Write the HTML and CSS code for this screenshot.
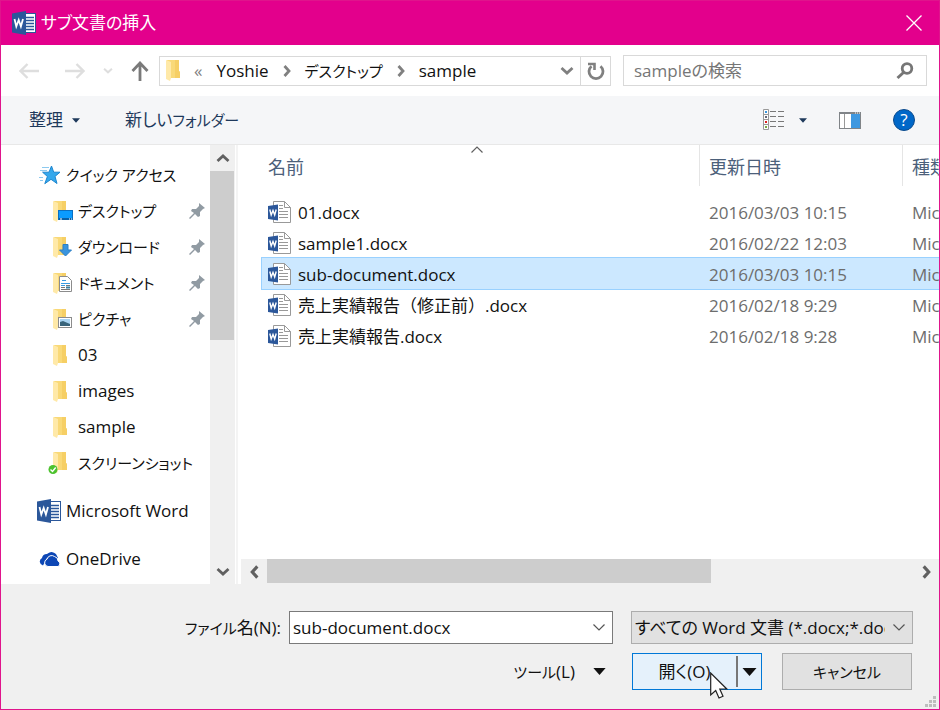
FILE: index.html
```html
<!DOCTYPE html>
<html lang="ja">
<head>
  <meta charset="UTF-8">
  <meta name="viewport" content="width=device-width, initial-scale=1.0">
  <title>サブ文書の挿入</title>
  <link rel="stylesheet" href="styles.css">
</head>
<body>
  <!-- shared icons -->
  <svg class="defs" width="0" height="0">
    <symbol id="word" viewBox="0 0 24 24">
      <rect x="13" y="2.500" width="10.500" height="19" fill="#fff" stroke="#2b579a"/>
      <path d="M14 6.500h8M14 9.500h8M14 12.500h8M14 15.500h8M14 18.500h8" stroke="#2b579a" stroke-width="1.300"/>
      <path d="M0 2.500L14 0v24L0 21.500z" fill="#2b579a"/>
      <path d="M2.500 8l1.800 7.500L6.700 9l2.200 6.500L11 8" fill="none" stroke="#fff" stroke-width="1.800"/>
    </symbol>
    <symbol id="docx" viewBox="0 0 23 22">
      <path d="M5.500.500h11l6 6v15h-17z" fill="#fff" stroke="#999"/>
      <path d="M16.500.500v6h6" fill="none" stroke="#999"/>
      <path d="M11 4.500h4M11 7.500h4M11 10.500h9M11 13.500h9M11 16.500h9" stroke="#999"/>
      <path d="M0 5l10-1.500v16L0 18z" fill="#2b579a"/>
      <path d="M1.800 8.500l1.400 5.500L5 9.500l1.700 4.500 1.500-5.500" fill="none" stroke="#fff" stroke-width="1.400"/>
    </symbol>
    <symbol id="folder" viewBox="0 0 14 21">
      <path d="M1 0h12v11l1 1v6H4z" fill="#f9d978"/>
      <path d="M9 0h4v11l1 1v6H9z" fill="#f6cf65"/>
      <path d="M0 0l5 2v16l-1 3-4-2z" fill="#ffe9a8"/>
    </symbol>
    <symbol id="pin" viewBox="0 0 16 16">
      <path d="M10 0l6 5-2 1-3 3v4l-2 1-3-3-5 5-1-1 5-5-3-2 1-2h4l3-3z" fill="#919ba3"/>
    </symbol>
    <symbol id="down" viewBox="0 0 14 8"><path d="M1.500 1.500L7 6.500l5.500-5" fill="none" stroke="currentColor" stroke-width="2.800"/></symbol>
    <symbol id="thin-down" viewBox="0 0 12 7"><path d="M.500.500L6 6 11.500.500" fill="none" stroke="currentColor" stroke-width="1.200"/></symbol>
    <symbol id="right" viewBox="0 0 8 12"><path d="M1.500 1L6 6l-4.500 5" fill="none" stroke="currentColor" stroke-width="2.800"/></symbol>
    <symbol id="triangle" viewBox="0 0 14 8"><path d="M0 0h14L7 8z" fill="currentColor"/></symbol>
  </svg>

  <header class="titlebar">
    <svg class="icon-word"><use href="#word"/></svg>
    <h1>サブ文書の挿入</h1>
    <button class="close" aria-label="閉じる">
      <svg width="16" height="16"><path d="M.500.500l15 15M15.500.500l-15 15" stroke="#fff" stroke-width="1.300"/></svg>
    </button>
  </header>

  <nav class="navbar">
    <div class="history">
      <button aria-label="戻る"><svg width="20" height="16"><path d="M20 8H2M8.500 1L1.500 8l7 7" fill="none" stroke="#dedede" stroke-width="2.400"/></svg></button>
      <button aria-label="進む"><svg width="20" height="16"><path d="M0 8h18M11.500 1l7 7-7 7" fill="none" stroke="#dedede" stroke-width="2.400"/></svg></button>
      <button class="recent" aria-label="最近表示した場所"><svg width="10" height="7"><use href="#down"/></svg></button>
      <button aria-label="上へ"><svg width="18" height="20"><path d="M9 20V2M1.500 10L9 2l7.500 8" fill="none" stroke="#7a7a7a" stroke-width="2.800"/></svg></button>
    </div>
    <div class="address">
      <svg class="icon-folder"><use href="#folder"/></svg>
      <span class="more">«</span>
      <a href="#">Yoshie</a>
      <svg width="8" height="12"><use href="#right"/></svg>
      <a href="#" class="kana">デスクトップ</a>
      <svg width="8" height="12"><use href="#right"/></svg>
      <a href="#">sample</a>
      <button class="address-list" aria-label="以前の場所"><svg width="14" height="9"><use href="#down"/></svg></button>
      <button class="refresh" aria-label="更新">
        <svg width="18" height="18"><path d="M4.500 4.200A7 7 0 1 0 13.500 4.200" fill="none" stroke="#808080" stroke-width="2.800"/><path d="M1 2h6.500v6" fill="none" stroke="#808080" stroke-width="2.600"/></svg>
      </button>
    </div>
    <div class="search">
      <input type="text" aria-label="検索" placeholder="sampleの検索">
      <svg width="18" height="18"><circle cx="11" cy="6.500" r="4.800" fill="none" stroke="#767676" stroke-width="2.800"/><path d="M7.500 10.500L1.500 16" stroke="#767676" stroke-width="3"/></svg>
    </div>
  </nav>

  <div class="toolbar">
    <button>整理 <svg class="caret"><use href="#triangle"/></svg></button>
    <button><span>新しい<span class="kana">フォルダー</span></span></button>
    <div class="views">
      <button aria-label="表示方法">
        <svg width="22" height="22">
          <path d="M.500.500h5v20h-5zM.500 5.500h5M.500 10.500h5M.500 15.500h5" fill="#fff" stroke="#999"/>
          <path d="M7 2.500h6M15 2.500h6M7 7.500h6M15 7.500h6M7 12.500h6M15 12.500h6M7 17.500h6M15 17.500h6" stroke="#777"/>
          <path d="M2 3h2" stroke="#3a96dd" stroke-width="2"/><path d="M2 8h2" stroke="#667" stroke-width="2"/>
          <path d="M2 13h2" stroke="#d22" stroke-width="2"/><path d="M2 18h2" stroke="#7a4" stroke-width="2"/>
        </svg>
        <svg class="caret"><use href="#triangle"/></svg>
      </button>
      <button aria-label="プレビュー ウィンドウ">
        <svg width="22" height="17"><rect x=".500" y=".500" width="21" height="16" fill="#fff" stroke="#808488"/><path d="M0 1h22" stroke="#808488" stroke-width="2"/><path d="M5.500 2v14" stroke="#999"/><rect x="12" y="2" width="9" height="14" fill="#3f98e0"/><path d="M16 1h1M18 1h1M20 1h1" stroke="#fff"/></svg>
      </button>
      <button class="help" aria-label="ヘルプ">?</button>
    </div>
  </div>

  <main>
    <aside>
      <ul class="places">
        <li class="root">
          <svg width="22" height="20"><path d="M12.500 1l2.200 6.200h6.300l-5 4.200 2 7.100-6-4.200-6.200 4.400 2.600-7.200-4.800-4.300h6.400z" fill="#35a8ec" stroke="#1d86cf"/><path d="M3 2.500h7M1 5.500h7M0 12.500h4M1 15.500h3" stroke="#8cc9ef"/></svg>
          <a href="#" class="kana">クイック アクセス</a>
        </li>
        <li>
          <svg class="place-icon"><use href="#folder" x="2" y="0" width="14" height="21"/><rect x="7.500" y="9.500" width="14" height="9" fill="#0a9bff" stroke="#0a6fc2"/><path d="M8 18h13" stroke="#0860a8" stroke-width="2"/><path d="M9 18h2M18 18h1M20 18h1" stroke="#fff"/></svg>
          <a href="#" class="kana">デスクトップ</a><svg class="pin"><use href="#pin"/></svg>
        </li>
        <li>
          <svg class="place-icon"><use href="#folder" x="2" y="0" width="14" height="21"/><path d="M12 7.500h5v5.500h3.500L14.500 19 8.500 13H12z" fill="#3a94dd" stroke="#2b7fc6"/></svg>
          <a href="#" class="kana">ダウンロード</a><svg class="pin"><use href="#pin"/></svg>
        </li>
        <li>
          <svg class="place-icon"><use href="#folder" x="2" y="0" width="14" height="21"/><path d="M8.500 3.500h8l4 4v11h-12z" fill="#fff" stroke="#8c8c8c"/><path d="M11 7.500h4M10 10.500h9M10 12.500h4" stroke="#3a9be0"/><path d="M15 12.500h4M10 14.500h4M10 16.500h9" stroke="#777"/><path d="M15 14.500h4" stroke="#3a7ea0" stroke-width="2"/></svg>
          <a href="#" class="kana">ドキュメント</a><svg class="pin"><use href="#pin"/></svg>
        </li>
        <li>
          <svg class="place-icon"><use href="#folder" x="2" y="0" width="14" height="21"/><rect x="7.500" y="8.500" width="13" height="10" fill="#fff" stroke="#8c8c8c"/><rect x="9" y="10" width="10" height="7" fill="#a9d4f2"/><path d="M9 13l3-1 7 3v2H9z" fill="#38647b"/></svg>
          <a href="#" class="kana">ピクチャ</a><svg class="pin"><use href="#pin"/></svg>
        </li>
        <li><svg class="place-icon"><use href="#folder" x="2" y="0" width="14" height="21"/></svg><a href="#">03</a></li>
        <li><svg class="place-icon"><use href="#folder" x="2" y="0" width="14" height="21"/></svg><a href="#">images</a></li>
        <li><svg class="place-icon"><use href="#folder" x="2" y="0" width="14" height="21"/></svg><a href="#">sample</a></li>
        <li>
          <svg class="place-icon synced"><use href="#folder" x="6" y="0" width="14" height="21"/><circle cx="6" cy="17.500" r="4.500" fill="#4cc22e"/><path d="M3.500 17.500l2 2 3.200-4" fill="none" stroke="#fff" stroke-width="1.400"/></svg>
          <a href="#" class="kana">スクリーンショット</a>
        </li>
        <li class="root spaced"><svg class="icon-word"><use href="#word"/></svg><a href="#">Microsoft Word</a></li>
        <li class="root spaced">
          <svg width="22" height="16"><path d="M4 14.500a4 4 0 0 1-1-7.500A5 5 0 0 1 8 3a6 6 0 0 1 10 2l1 2H8z" fill="#0d47b5"/><path d="M9 15.500a3.800 3.800 0 0 1-1-7.300A4.800 4.800 0 0 1 15.500 5.500a4.500 4.500 0 0 1 3.500 4.500A3 3 0 0 1 19 15.500z" fill="#0d47b5" stroke="#fff"/></svg>
          <a href="#">OneDrive</a>
        </li>
      </ul>
      <div class="scroll-v">
        <button aria-label="上へスクロール"><svg class="flip" width="14" height="9"><use href="#down"/></svg></button>
        <div class="thumb"></div>
        <button aria-label="下へスクロール"><svg width="14" height="9"><use href="#down"/></svg></button>
      </div>
    </aside>

    <section class="files">
      <div class="list">
        <svg class="sort"><use href="#thin-down"/></svg>
        <table>
          <thead>
            <tr><th class="name">名前</th><th class="date">更新日時</th><th class="type">種類</th></tr>
          </thead>
          <tbody>
            <tr><td class="name"><svg class="docx"><use href="#docx"/></svg>01.docx</td><td>2016/03/03 10:15</td><td>Microsoft Word</td></tr>
            <tr><td class="name"><svg class="docx"><use href="#docx"/></svg>sample1.docx</td><td>2016/02/22 12:03</td><td>Microsoft Word</td></tr>
            <tr class="selected"><td class="name"><svg class="docx"><use href="#docx"/></svg>sub-document.docx</td><td>2016/03/03 10:15</td><td>Microsoft Word</td></tr>
            <tr><td class="name"><svg class="docx"><use href="#docx"/></svg>売上実績報告（修正前）.docx</td><td>2016/02/18 9:29</td><td>Microsoft Word</td></tr>
            <tr><td class="name"><svg class="docx"><use href="#docx"/></svg>売上実績報告.docx</td><td>2016/02/18 9:28</td><td>Microsoft Word</td></tr>
          </tbody>
        </table>
      </div>
      <div class="scroll-h">
        <button aria-label="左へスクロール"><svg class="flip" width="9" height="14"><use href="#right"/></svg></button>
        <div class="thumb"></div>
        <button aria-label="右へスクロール"><svg width="9" height="14"><use href="#right"/></svg></button>
      </div>
    </section>
  </main>

  <footer>
    <div class="row">
      <label for="filename"><span class="kana">ファイル</span>名(N):</label>
      <div class="combo">
        <input type="text" id="filename" value="sub-document.docx">
        <button aria-label="履歴"><svg width="12" height="7"><use href="#thin-down"/></svg></button>
      </div>
      <div class="filter">
        <select aria-label="ファイルの種類">
          <option>すべての Word 文書 (*.docx;*.docm;*.dotx)</option>
        </select>
        <svg width="12" height="7"><use href="#thin-down"/></svg>
      </div>
    </div>
    <div class="row actions">
      <button class="tools"><span><span class="kana">ツール</span>(L)</span> <svg width="13" height="7"><use href="#triangle"/></svg></button>
      <div class="split">
        <button class="open">開く(O)</button>
        <button class="open-menu" aria-label="開くオプション"><svg width="15" height="8"><use href="#triangle"/></svg></button>
        <svg class="cursor" width="18" height="27"><path d="M.700 1v22l5-4.500 3.300 7.500 4-1.800L9.800 17h7z" fill="#fff" stroke="#222" stroke-width="1.200"/></svg>
      </div>
      <button class="cancel kana">キャンセル</button>
    </div>
    <svg class="grip" width="11" height="11"><path d="M8 0h3v3H8zM4 4h3v3H4zM8 4h3v3H8zM0 8h3v3H0zM4 8h3v3H4zM8 8h3v3H8z" fill="#bdbdbd"/></svg>
  </footer>
</body>
</html>
```
FILE: styles.css
```css
* {
  box-sizing: border-box;
}

body {
  margin: 0;
  min-height: 100vh;
  display: flex;
  flex-direction: column;
  border: 1px solid #e0148c;
  background: #fff;
  color: #111;
  font-family: "Open Sans", "Noto Sans CJK JP", sans-serif;
  font-size: 17px;
  line-height: 24px;
  font-feature-settings: "palt";
  overflow-x: hidden;
}

button, input, select {
  font: inherit;
  font-feature-settings: inherit;
  color: inherit;
}

button {
  display: flex;
  align-items: center;
  justify-content: center;
  padding: 0;
  border: none;
  background: none;
  white-space: nowrap;
}

a {
  color: inherit;
  text-decoration: none;
  white-space: nowrap;
}

svg {
  flex: none;
}

.defs {
  position: absolute;
}

.flip {
  transform: rotate(180deg);
}

.kana {
  font-size: 15px;
}

.icon-word {
  width: 24px;
  height: 24px;
}

/* title bar */
.titlebar {
  display: flex;
  align-items: center;
  gap: 5px;
  height: 44px;
  padding: 0 17px 0 11px;
  background: #e3008c;
  color: #fff;
}

.titlebar h1 {
  margin: 0;
  font-size: 17px;
  font-weight: 400;
}

.close {
  margin-left: auto;
}

/* address row */
.navbar {
  display: flex;
  align-items: center;
  gap: 12px;
  height: 51px;
  padding: 0 12px 0 18px;
}

.history {
  display: flex;
  align-items: center;
  gap: 18px;
  margin-right: -2px;
}

.history button:nth-child(2) {
  margin-left: 8px;
}

.recent {
  color: #dedede;
}

.address {
  flex: 1;
  display: flex;
  align-items: center;
  gap: 14px;
  height: 30px;
  padding-left: 6px;
  border: 1px solid #d9d9d9;
  color: #808080;
}

.address a {
  color: #111;
}

.icon-folder {
  width: 14px;
  height: 21px;
}

.address-list {
  margin-left: auto;
  margin-right: -8px;
}

.refresh {
  align-self: stretch;
  width: 30px;
  border-left: 1px solid #d9d9d9;
}

.search {
  display: flex;
  align-items: center;
  width: 304px;
  height: 31px;
  padding: 0 12px 0 10px;
  border: 1px solid #d9d9d9;
}

.search input {
  flex: 1;
  min-width: 0;
  padding: 0;
  border: none;
  outline: none;
}

.search input::placeholder {
  color: #767676;
}

/* command bar */
.toolbar {
  display: flex;
  align-items: center;
  gap: 45px;
  height: 49px;
  padding: 0 24px 0 28px;
  border-bottom: 1px solid #e8e8e8;
  background: #f5f6f8;
  color: #1e395b;
}

.toolbar button {
  gap: 9px;
}

.caret {
  width: 8px;
  height: 5px;
}

.views {
  display: flex;
  align-items: center;
  gap: 32px;
  margin-left: auto;
}

.views button {
  gap: 14px;
}

.views .help {
  width: 22px;
  height: 22px;
  border: 1px solid #0b4a8c;
  border-radius: 50%;
  background: #0067c8;
  color: #fff;
}

/* panes */
main {
  flex: 1;
  display: flex;
}

aside {
  display: flex;
  width: 237px;
  border-right: 2px solid #f4f4f4;
}

.places {
  flex: 1;
  min-width: 0;
  margin: 0;
  padding: 12px 5px 7px 0;
  list-style: none;
}

.places li {
  display: flex;
  align-items: center;
  gap: 4px;
  height: 36px;
  padding-left: 50px;
}

.places .root {
  gap: 5px;
  padding-left: 38px;
}

.places .spaced {
  margin-top: 12px;
}

.places .icon-word {
  margin-left: -2px;
}

.place-icon {
  width: 23px;
  height: 21px;
}

.place-icon.synced {
  width: 27px;
  height: 22px;
  margin-left: -4px;
}

.pin {
  width: 16px;
  height: 16px;
  margin-left: auto;
}

.scroll-v, .scroll-h {
  display: flex;
  background: #f0f0f0;
  color: #606060;
}

.scroll-v {
  flex-direction: column;
  width: 25px;
  margin-right: 1px;
}

.scroll-v button {
  height: 26px;
}

.scroll-v .thumb {
  flex: 0 1 169px;
  width: 24px;
  margin-bottom: auto;
  background: #cdcdcd;
}

.files {
  flex: 1;
  min-width: 0;
  display: flex;
  flex-direction: column;
  padding-left: 3px;
}

.list {
  position: relative;
  flex: 1;
  padding-left: 21px;
}

.sort {
  position: absolute;
  left: 33%;
  top: 1px;
  width: 12px;
  height: 7px;
  color: #606060;
  transform: rotate(180deg);
}

table {
  width: 100%;
  table-layout: fixed;
  border-spacing: 0;
  font-feature-settings: normal;
}

th, td {
  padding: 2px 0 0 10px;
  overflow: hidden;
  text-align: left;
  white-space: nowrap;
}

th {
  height: 41px;
  border-left: 1px solid #e5e5e5;
  padding-left: 9px;
  font-size: 18px;
  font-weight: 400;
  color: #4c607a;
}

th.name {
  border-left: none;
}

.name {
  padding-left: 6px;
}

.date {
  width: 203px;
}

.type {
  width: 37px;
}

tbody::before {
  content: "";
  display: block;
  height: 10px;
}

td {
  height: 31px;
  color: #6d6d6d;
}

td.name {
  color: #111;
}

.docx {
  width: 23px;
  height: 22px;
  margin-right: 7px;
  vertical-align: -4px;
}

.selected {
  background: #cce8ff;
  outline: 1px solid #99d1ff;
}

.scroll-h {
  height: 25px;
}

.scroll-h button {
  width: 26px;
}

.scroll-h .thumb {
  flex: 0 1 444px;
  height: 24px;
  margin-right: auto;
  background: #cdcdcd;
}

/* bottom area */
footer {
  position: relative;
  padding: 27px 26px 19px;
  background: #f0f0f0;
}

.row {
  display: flex;
  align-items: center;
  justify-content: flex-end;
}

.row label {
  width: 254px;
  margin-right: 8px;
  text-align: right;
}

.combo {
  flex: 1;
  display: flex;
  height: 33px;
  margin-right: 18px;
  border: 1px solid #7a7a7a;
  background: #fff;
}

.combo input {
  flex: 1;
  min-width: 0;
  padding: 0 3px;
  border: none;
  outline: none;
}

.combo button {
  width: 26px;
  color: #555;
}

.filter {
  position: relative;
  width: 282px;
  height: 33px;
}

.filter select {
  width: 100%;
  height: 100%;
  padding: 0 27px 0 3px;
  border: 1px solid #adadad;
  border-radius: 0;
  background: #e1e1e1;
  appearance: none;
}

.filter svg {
  position: absolute;
  right: 8px;
  top: 13px;
  color: #555;
  pointer-events: none;
}

.actions {
  gap: 20px;
  margin-top: 9px;
  padding-right: 1px;
}

.tools {
  gap: 18px;
  margin-right: 6px;
}

.split, .cancel {
  width: 130px;
  height: 37px;
}

.split {
  position: relative;
  display: flex;
  align-items: center;
  border: 1px solid #0078d7;
  background: #e5f1fb;
}

.open {
  flex: 1;
}

.open-menu {
  width: 25px;
  height: 31px;
  border-left: 2px solid #777;
}

.cursor {
  position: absolute;
  left: 77px;
  top: 18px;
}

.cancel {
  border: 1px solid #adadad;
  background: #e1e1e1;
}

.grip {
  position: absolute;
  right: 3px;
  bottom: 2px;
}
```
